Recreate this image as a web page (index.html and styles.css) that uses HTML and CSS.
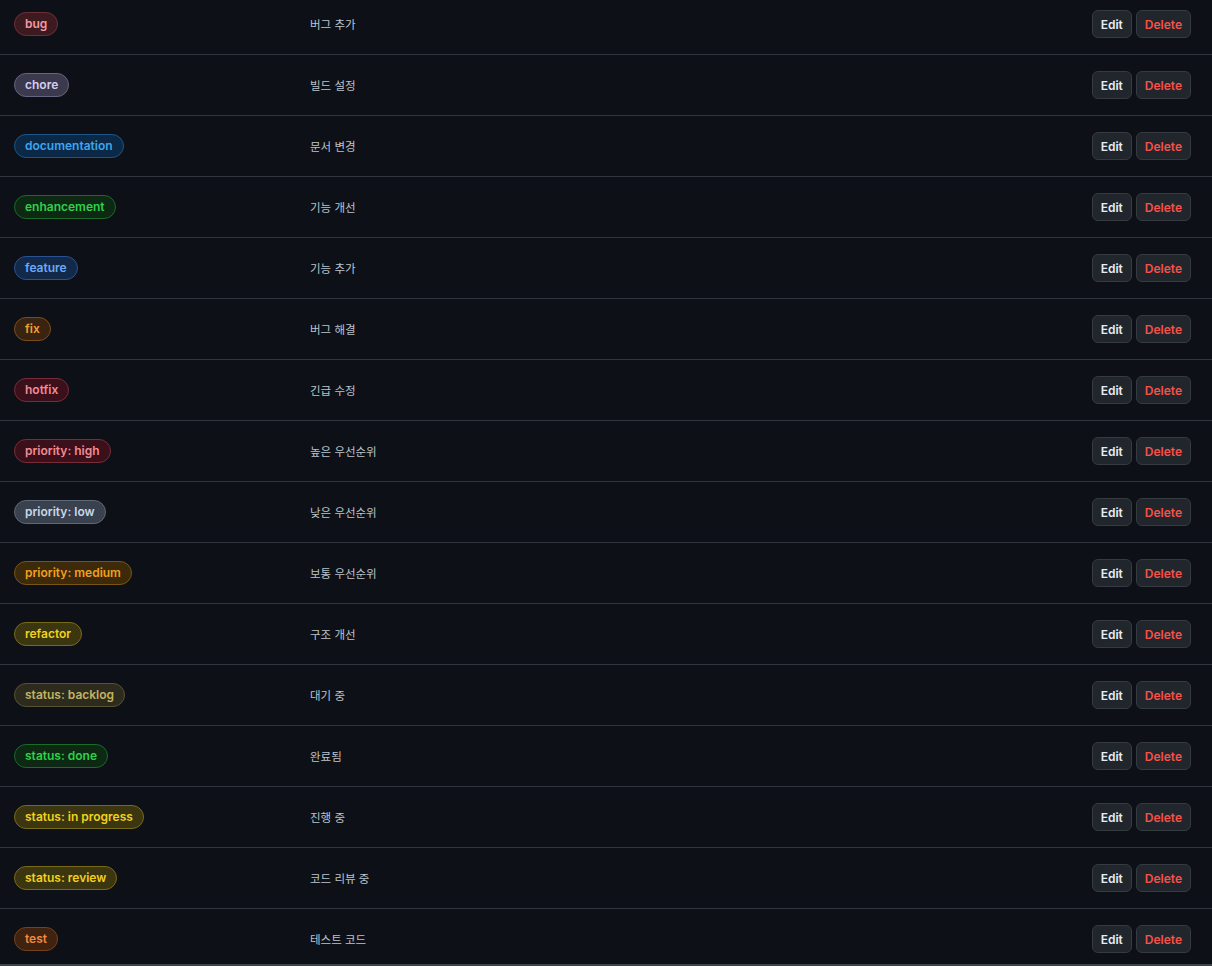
FILE: index.html
```html
<!DOCTYPE html>
<html lang="ko">
<head>
<meta charset="utf-8">
<title>Labels</title>
<link rel="stylesheet" href="styles.css">
</head>
<body>
<div class="panel">
  <div class="list">
    <div class="row"><div class="cell-label"><span class="label l-bug">bug</span></div><div class="desc">버그 추가</div><div class="actions"><button class="btn">Edit</button><button class="btn danger">Delete</button></div></div>
    <div class="row"><div class="cell-label"><span class="label l-chore">chore</span></div><div class="desc">빌드 설정</div><div class="actions"><button class="btn">Edit</button><button class="btn danger">Delete</button></div></div>
    <div class="row"><div class="cell-label"><span class="label l-docs">documentation</span></div><div class="desc">문서 변경</div><div class="actions"><button class="btn">Edit</button><button class="btn danger">Delete</button></div></div>
    <div class="row"><div class="cell-label"><span class="label l-green">enhancement</span></div><div class="desc">기능 개선</div><div class="actions"><button class="btn">Edit</button><button class="btn danger">Delete</button></div></div>
    <div class="row"><div class="cell-label"><span class="label l-feature">feature</span></div><div class="desc">기능 추가</div><div class="actions"><button class="btn">Edit</button><button class="btn danger">Delete</button></div></div>
    <div class="row"><div class="cell-label"><span class="label l-fix">fix</span></div><div class="desc">버그 해결</div><div class="actions"><button class="btn">Edit</button><button class="btn danger">Delete</button></div></div>
    <div class="row"><div class="cell-label"><span class="label l-red">hotfix</span></div><div class="desc">긴급 수정</div><div class="actions"><button class="btn">Edit</button><button class="btn danger">Delete</button></div></div>
    <div class="row"><div class="cell-label"><span class="label l-red">priority: high</span></div><div class="desc">높은 우선순위</div><div class="actions"><button class="btn">Edit</button><button class="btn danger">Delete</button></div></div>
    <div class="row"><div class="cell-label"><span class="label l-low">priority: low</span></div><div class="desc">낮은 우선순위</div><div class="actions"><button class="btn">Edit</button><button class="btn danger">Delete</button></div></div>
    <div class="row"><div class="cell-label"><span class="label l-medium">priority: medium</span></div><div class="desc">보통 우선순위</div><div class="actions"><button class="btn">Edit</button><button class="btn danger">Delete</button></div></div>
    <div class="row"><div class="cell-label"><span class="label l-yellow">refactor</span></div><div class="desc">구조 개선</div><div class="actions"><button class="btn">Edit</button><button class="btn danger">Delete</button></div></div>
    <div class="row"><div class="cell-label"><span class="label l-backlog">status: backlog</span></div><div class="desc">대기 중</div><div class="actions"><button class="btn">Edit</button><button class="btn danger">Delete</button></div></div>
    <div class="row"><div class="cell-label"><span class="label l-green">status: done</span></div><div class="desc">완료됨</div><div class="actions"><button class="btn">Edit</button><button class="btn danger">Delete</button></div></div>
    <div class="row"><div class="cell-label"><span class="label l-yellow">status: in progress</span></div><div class="desc">진행 중</div><div class="actions"><button class="btn">Edit</button><button class="btn danger">Delete</button></div></div>
    <div class="row"><div class="cell-label"><span class="label l-yellow">status: review</span></div><div class="desc">코드 리뷰 중</div><div class="actions"><button class="btn">Edit</button><button class="btn danger">Delete</button></div></div>
    <div class="row"><div class="cell-label"><span class="label l-test">test</span></div><div class="desc">테스트 코드</div><div class="actions"><button class="btn">Edit</button><button class="btn danger">Delete</button></div></div>
  </div>
</div>
</body>
</html>
```
FILE: styles.css
```css
html, body {
  margin: 0;
  padding: 0;
  background: #0d1117;
}
body {
  font-family: Inter, "Noto Sans", "Noto Sans CJK KR", sans-serif;
  color: #c9d1d9;
  overflow: hidden;
}
.panel {
  margin-top: -6px;
  height: 972px;
  overflow: hidden;
  border-bottom: 2px solid #3f444b;
  box-sizing: border-box;
}
.list {
  display: flex;
  flex-direction: column;
}
.row {
  display: grid;
  grid-template-columns: 296px 1fr auto;
  align-items: center;
  height: 60px;
  padding: 0 21px 0 14px;
  border-bottom: 1px solid #30363d;
}
.label {
  display: inline-block;
  box-sizing: border-box;
  height: 24px;
  line-height: 22px;
  padding: 0 10px;
  border: 1px solid;
  border-radius: 12px;
  font-size: 12px;
  font-weight: 600;
  white-space: nowrap;
}
.desc {
  font-family: "Noto Sans CJK KR", sans-serif;
  font-size: 11.5px;
  line-height: 16px;
  margin-top: -1px;
  color: #bcc3cb;
}
.actions {
  display: flex;
  gap: 4px;
}
.btn {
  box-sizing: border-box;
  height: 28px;
  min-width: 40px;
  padding: 0 8px;
  background: #21262d;
  border: 1px solid #363b42;
  border-radius: 6px;
  color: #e6edf3;
  font-family: Inter, "Noto Sans", sans-serif;
  font-size: 12px;
  font-weight: 600;
}
.btn.danger { color: #f85149; padding: 0 8px; }

.l-bug { background: #3d1a20; border-color: #6e2f39; color: #f29aa6; }
.l-chore { background: #3a394d; border-color: #66647e; color: #d6cef2; }
.l-docs { background: #0b2946; border-color: #1c5686; color: #3ea6f0; }
.l-green { background: #0d2914; border-color: #1a6a2a; color: #2fd14a; }
.l-feature { background: #12294a; border-color: #295390; color: #6ea8f5; }
.l-fix { background: #3a2411; border-color: #7a4c1b; color: #f0a030; }
.l-red { background: #3c101a; border-color: #782c37; color: #f28b95; }
.l-low { background: #38414d; border-color: #5d6976; color: #c8d8ea; }
.l-medium { background: #3c2a0b; border-color: #7a5412; color: #f0a020; }
.l-yellow { background: #3b3510; border-color: #776a19; color: #f0d21c; }
.l-backlog { background: #2d2b1d; border-color: #58532f; color: #c2b360; }
.l-test { background: #402210; border-color: #77411b; color: #f08a3c; }
```
